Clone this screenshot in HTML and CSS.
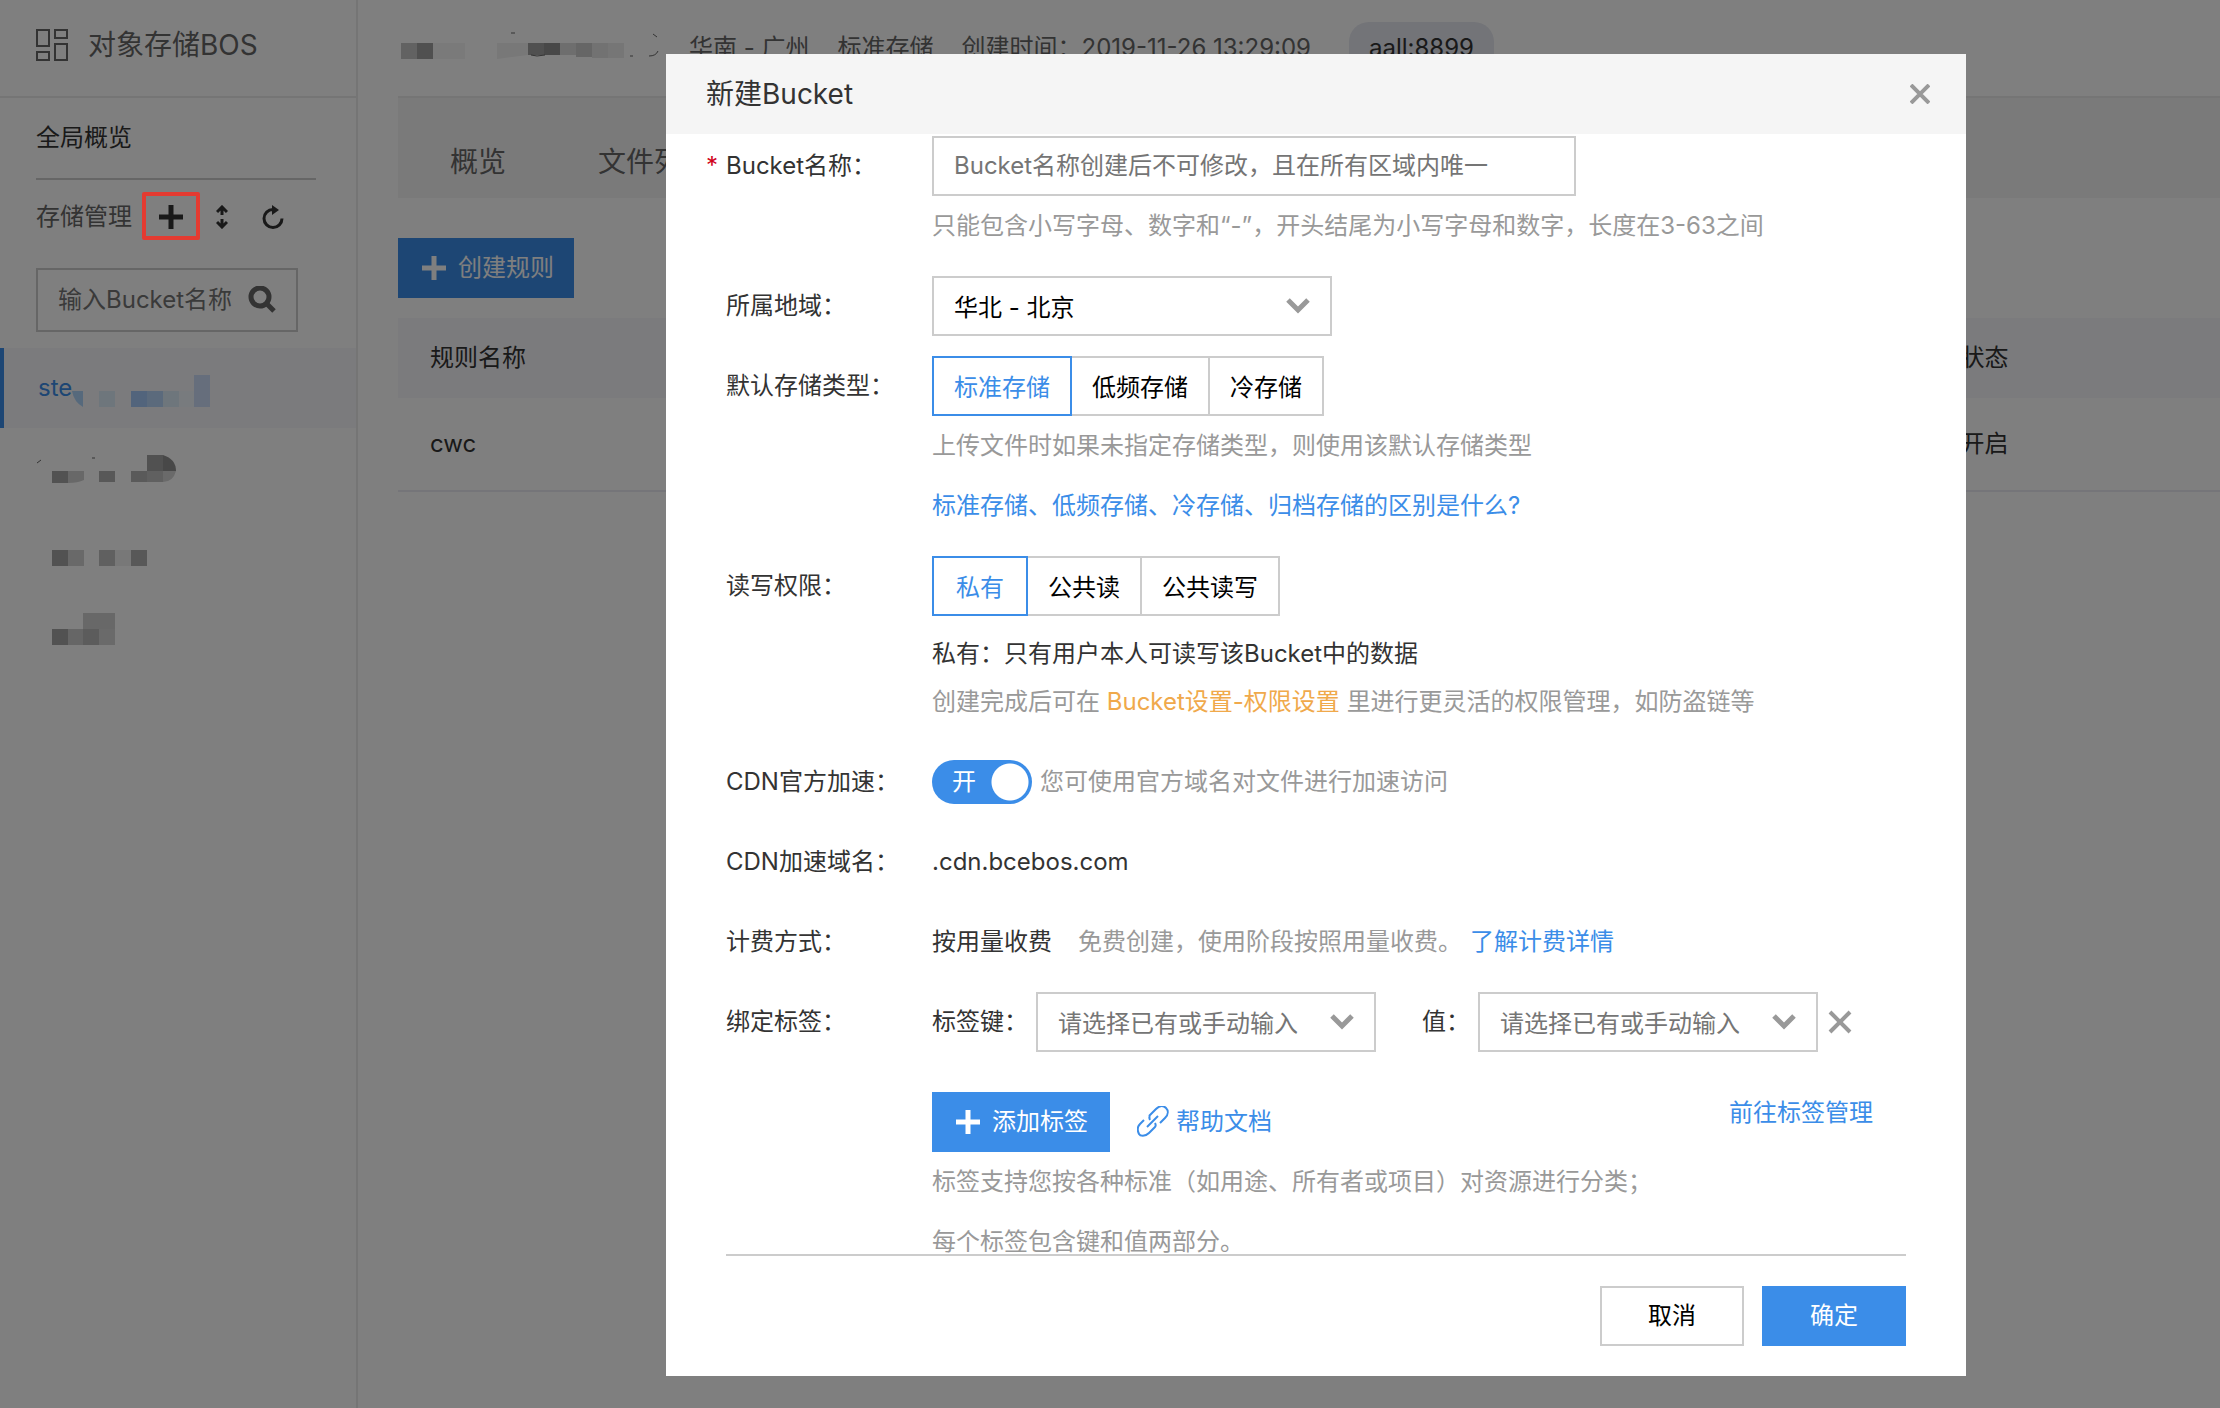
FILE: index.html
```html
<!DOCTYPE html>
<html lang="zh-CN">

<head>
    <meta charset="UTF-8">
    <title>对象存储BOS</title>
    <link rel="stylesheet" href="styles.css">
</head>

<body>
    <div class="page">
        <!-- 左侧导航 -->
        <aside class="sidebar">
            <div class="sidebar-title">
                <svg width="32" height="32" viewBox="0 0 32 32" fill="none" stroke="#666" stroke-width="2">
                    <rect x="1" y="1" width="12" height="16" />
                    <rect x="19" y="1" width="12" height="8" />
                    <rect x="1" y="23" width="12" height="8" />
                    <rect x="19" y="15" width="12" height="16" />
                </svg>
                <span>对象存储BOS</span>
            </div>
            <a class="overview" href="#">全局概览</a>
            <div class="manage">
                <span>存储管理</span>
                <button class="icon-btn add-bucket" aria-label="新建Bucket">
                    <svg width="24" height="24" viewBox="0 0 24 24" stroke="#333" stroke-width="5">
                        <path d="M12 0v24M0 12h24" />
                    </svg>
                </button>
                <button class="icon-btn" aria-label="排序">
                    <svg width="12" height="24" viewBox="0 0 12 24" fill="none" stroke="#333" stroke-width="3">
                        <path d="M6 2v8M1 7l5-5 5 5M6 14v8M1 17l5 5 5-5" />
                    </svg>
                </button>
                <button class="icon-btn" aria-label="刷新">
                    <svg width="24" height="24" viewBox="0 0 24 24">
                        <path d="M12 4.500a9 9 0 1 0 9 9" fill="none" stroke="#333" stroke-width="3" />
                        <path d="M11 0l7 5-7 5z" fill="#333" />
                    </svg>
                </button>
            </div>
            <div class="search">
                <input type="text" placeholder="输入Bucket名称" aria-label="输入Bucket名称">
                <svg width="28" height="28" viewBox="0 0 28 28" fill="none" stroke="#666" stroke-width="5">
                    <circle cx="12" cy="11" r="9" />
                    <path d="M18 17l8 8" />
                </svg>
            </div>
            <ul class="bucket-list">
                <li class="bucket active">
                    <span>ste</span>
                    <svg width="140" height="80" viewBox="0 0 140 80">
                        <path d="M0 43h11v16q-9-5-11-16z" fill="#acd2f8" />
                        <path d="M27 43h16v16h-16z" fill="#dcecf8" />
                        <path d="M59 43h16v16h-16z" fill="#a4c8f8" />
                        <path d="M75 43h16v16h-16z" fill="#b6d4f8" />
                        <path d="M91 43h16v16h-16z" fill="#dcecf8" />
                        <path d="M107 43h16v16h-16z" fill="#f0f6fc" />
                        <path d="M122 27h16v32h-16z" fill="#ccdcf8" />
                    </svg>
                </li>
                <li class="bucket">
                    <svg width="140" height="80" viewBox="0 0 140 80">
                        <path d="M1 35l4-3M56 30h3" stroke="#666" />
                        <path d="M16 43h16v12h-16z" fill="#a4a4a4" />
                        <path d="M32 43h16v9q-6 3-16 3z" fill="#d0d0d0" />
                        <path d="M63 43h16v11h-16z" fill="#b0b0b0" />
                        <path d="M95 43h16v11h-16z" fill="#b4b4b4" />
                        <path d="M111 27h16v16h-16z" fill="#a2a2a2" />
                        <path d="M127 27q13 4 13 16h-13z" fill="#909090" />
                        <path d="M111 43h16v11h-16z" fill="#c0c0c0" />
                        <path d="M127 43h13q-3 11-13 11z" fill="#d4d4d4" />
                    </svg>
                </li>
                <li class="bucket">
                    <svg width="140" height="80" viewBox="0 0 140 80">
                        <path d="M16 42h16v16h-16z" fill="#a4a4a4" />
                        <path d="M32 42h16v16h-16z" fill="#d2d2d2" />
                        <path d="M63 42h16v16h-16z" fill="#c0c0c0" />
                        <path d="M79 42h16v16h-16z" fill="#f0f0f0" />
                        <path d="M95 42h16v16h-16z" fill="#b0b0b0" />
                    </svg>
                </li>
                <li class="bucket">
                    <svg width="140" height="80" viewBox="0 0 140 80">
                        <path d="M47 25h32v16h-32z" fill="#d0d0d0" />
                        <path d="M16 41h16v16h-16z" fill="#a4a4a4" />
                        <path d="M32 41h16v16h-16z" fill="#ccc" />
                        <path d="M47 41h16v16h-16z" fill="#b8b8b8" />
                        <path d="M63 41h16v16h-16z" fill="#d4d4d4" />
                    </svg>
                </li>
            </ul>
        </aside>

        <!-- 右侧内容 -->
        <main class="main">
            <div class="bucket-info">
                <svg width="266" height="32" viewBox="0 0 266 32">
                    <path d="M0 11h16v16h-16z" fill="#c4c4c4" />
                    <path d="M16 11h16v16h-16z" fill="#a0a0a0" />
                    <path d="M32 11h32v16h-32z" fill="#f4f4f4" />
                    <path d="M96 11h31v12l-31 4z" fill="#f0f0f0" />
                    <path d="M127 11h16v12h-16z" fill="#a0a0a0" />
                    <path d="M143 11h16v12h-16z" fill="#909090" />
                    <path d="M159 11h16v12h-16z" fill="#dcdcdc" />
                    <path d="M175 11h16v14h-16z" fill="#ccc" />
                    <path d="M191 11h16v15h-16z" fill="#e4e4e4" />
                    <path d="M207 11h16v15h-16z" fill="#ececec" />
                    <path d="M110 1h4M252 2l4 3M130 23l6 1 8-1M229 24h3M248 24q7 0 9-5" fill="none" stroke="#666" />
                </svg>
                <span>华南 - 广州</span>
                <span>标准存储</span>
                <span>创建时间：2019-11-26 13:29:09</span>
                <span class="tag">aall:8899</span>
            </div>
            <nav class="tabs">
                <a href="#">概览</a>
                <a href="#">文件列表</a>
            </nav>
            <button class="btn btn-primary create-rule">
                <svg width="24" height="24" viewBox="0 0 24 24" stroke="#fff" stroke-width="5">
                    <path d="M12 0v24M0 12h24" />
                </svg>
                <span>创建规则</span>
            </button>
            <table class="rules">
                <thead>
                    <tr>
                        <th class="col-name">规则名称</th>
                        <th>状态</th>
                    </tr>
                </thead>
                <tbody>
                    <tr>
                        <td>cwc</td>
                        <td>开启</td>
                    </tr>
                </tbody>
            </table>
        </main>
    </div>

    <!-- 新建Bucket 弹窗 -->
    <div class="mask">
        <div class="dialog" role="dialog" aria-labelledby="dialog-title">
            <div class="dialog-head">
                <h1 id="dialog-title">新建Bucket</h1>
                <button class="icon-btn" aria-label="关闭">
                    <svg width="20" height="20" viewBox="0 0 20 20" stroke="#999" stroke-width="4">
                        <path d="M1 1l18 18M19 1L1 19" />
                    </svg>
                </button>
            </div>

            <form class="dialog-body">
                <div class="row">
                    <label class="row-label required" for="bucket-name">Bucket名称：</label>
                    <div class="row-content">
                        <input class="field name-field" type="text" id="bucket-name" placeholder="Bucket名称创建后不可修改，且在所有区域内唯一">
                        <p class="hint">只能包含小写字母、数字和“-”，开头结尾为小写字母和数字，长度在3-63之间</p>
                    </div>
                </div>

                <div class="row">
                    <label class="row-label" for="region">所属地域：</label>
                    <div class="row-content">
                        <div class="select region-select">
                            <select class="field" id="region">
                                <option>华北 - 北京</option>
                            </select>
                            <svg class="arrow" width="24" height="16" viewBox="0 0 24 16" fill="none" stroke="#999" stroke-width="5">
                                <path d="M2 2l10 10 10-10" />
                            </svg>
                        </div>
                    </div>
                </div>

                <div class="row">
                    <span class="row-label">默认存储类型：</span>
                    <div class="row-content">
                        <div class="segment">
                            <button type="button" class="selected">标准存储</button>
                            <button type="button">低频存储</button>
                            <button type="button">冷存储</button>
                        </div>
                        <p class="hint">上传文件时如果未指定存储类型，则使用该默认存储类型</p>
                        <p><a class="link" href="#">标准存储、低频存储、冷存储、归档存储的区别是什么?</a></p>
                    </div>
                </div>

                <div class="row">
                    <span class="row-label">读写权限：</span>
                    <div class="row-content">
                        <div class="segment">
                            <button type="button" class="selected">私有</button>
                            <button type="button">公共读</button>
                            <button type="button">公共读写</button>
                        </div>
                        <div class="acl-desc">
                            <p>私有：只有用户本人可读写该Bucket中的数据</p>
                            <p class="hint">创建完成后可在 <span class="warn">Bucket设置-权限设置</span> 里进行更灵活的权限管理，如防盗链等</p>
                        </div>
                    </div>
                </div>

                <div class="row">
                    <label class="row-label" for="cdn">CDN官方加速：</label>
                    <div class="row-content inline">
                        <div class="switch">
                            <input type="checkbox" id="cdn" checked>
                            <span>开</span>
                        </div>
                        <span class="hint">您可使用官方域名对文件进行加速访问</span>
                    </div>
                </div>

                <div class="row">
                    <span class="row-label">CDN加速域名：</span>
                    <div class="row-content">.cdn.bcebos.com</div>
                </div>

                <div class="row">
                    <span class="row-label">计费方式：</span>
                    <div class="row-content inline">
                        <span class="billing">按用量收费</span>
                        <span class="hint">免费创建，使用阶段按照用量收费。</span>
                        <a class="link" href="#">了解计费详情</a>
                    </div>
                </div>

                <div class="row">
                    <span class="row-label">绑定标签：</span>
                    <div class="row-content">
                        <div class="inline">
                            <label for="tag-key">标签键：</label>
                            <div class="select tag-select">
                                <select class="field placeholder" id="tag-key">
                                    <option>请选择已有或手动输入</option>
                                </select>
                                <svg class="arrow" width="24" height="16" viewBox="0 0 24 16" fill="none" stroke="#999" stroke-width="5">
                                    <path d="M2 2l10 10 10-10" />
                                </svg>
                            </div>
                            <label class="tag-value" for="tag-value">值：</label>
                            <div class="select tag-select">
                                <select class="field placeholder" id="tag-value">
                                    <option>请选择已有或手动输入</option>
                                </select>
                                <svg class="arrow" width="24" height="16" viewBox="0 0 24 16" fill="none" stroke="#999" stroke-width="5">
                                    <path d="M2 2l10 10 10-10" />
                                </svg>
                            </div>
                            <button type="button" class="icon-btn" aria-label="删除标签">
                                <svg width="28" height="28" viewBox="0 0 28 28" stroke="#999" stroke-width="4">
                                    <path d="M4 4l20 20M24 4L4 24" />
                                </svg>
                            </button>
                        </div>
                        <div class="tag-actions">
                            <button type="button" class="btn btn-primary add-tag">
                                <svg width="24" height="24" viewBox="0 0 24 24" stroke="#fff" stroke-width="5">
                                    <path d="M12 0v24M0 12h24" />
                                </svg>
                                <span>添加标签</span>
                            </button>
                            <a class="link help" href="#">
                                <svg width="32" height="32" viewBox="0 0 32 32" fill="none" stroke="#3b8de8" stroke-width="2">
                                    <path d="M12 10l7-7c4-4 8-3 10-1s3 6-1 10l-5 5" />
                                    <path d="M13 14c-1-2-1-3 0-4" />
                                    <path d="M7 14l-4 4c-4 4-2 8-1 10s6 3 10-1l6-6c1-1 1-2 0-4" />
                                    <path d="M10 21l11-11" />
                                </svg>
                                <span>帮助文档</span>
                            </a>
                            <a class="link tag-manage" href="#">前往标签管理</a>
                        </div>
                        <p class="hint">标签支持您按各种标准（如用途、所有者或项目）对资源进行分类；</p>
                        <p class="hint">每个标签包含键和值两部分。</p>
                    </div>
                </div>
            </form>

            <div class="dialog-foot">
                <button class="btn">取消</button>
                <button class="btn btn-primary">确定</button>
            </div>
        </div>
    </div>
</body>

</html>
```

FILE: styles.css
```css
/* 全局 */
* {
    box-sizing: border-box;
}

body {
    margin: 0;
    font-family: Inter, "Noto Sans CJK SC", sans-serif;
    font-size: 24px;
    line-height: 60px;
    color: #333;
    background: #fff;
    overflow: hidden;
}

p,
h1,
ul {
    margin: 0;
    padding: 0;
}

a {
    color: inherit;
    text-decoration: none;
}

svg {
    display: block;
    flex: none;
}

button,
input,
select {
    font: inherit;
    color: inherit;
}

.page {
    display: flex;
    min-height: 100vh;
}

.icon-btn {
    padding: 0;
    border: none;
    background: none;
    cursor: pointer;
}

/* 左侧导航 */
.sidebar {
    flex: none;
    width: 358px;
    border-right: 2px solid #ebebeb;
}

.sidebar-title {
    display: flex;
    align-items: center;
    gap: 20px;
    height: 98px;
    padding: 0 36px 6px;
    border-bottom: 2px solid #ebebeb;
    font-size: 28px;
    color: #666;
}

.overview {
    display: block;
    margin: 0 40px 0 36px;
    border-bottom: 2px solid #ccc;
    line-height: 80px;
}

.manage {
    display: flex;
    align-items: center;
    margin-left: 36px;
    height: 74px;
    color: #666;
}

.manage .icon-btn {
    margin-right: 33px;
}

/* 红框高亮，显示在遮罩之上 */
.manage .add-bucket {
    position: relative;
    margin-left: 27px;
}

.add-bucket::after {
    content: "";
    position: absolute;
    z-index: 20;
    inset: -13px -17px -11px;
    border: 4px solid #e43b31;
    border-radius: 2px;
}

.search {
    display: flex;
    align-items: center;
    margin: 14px 58px 16px 36px;
    height: 64px;
    padding: 0 20px;
    border: 2px solid #ccc;
}

.search input {
    flex: 1;
    min-width: 0;
    padding: 0;
    border: none;
    outline: none;
    background: none;
}

.search input::placeholder {
    color: #757575;
}

.bucket-list {
    list-style: none;
}

.bucket {
    display: flex;
    height: 80px;
    padding-left: 36px;
    line-height: 80px;
}

.bucket.active {
    padding-left: 34px;
    border-left: 4px solid #3b8de8;
    background: #f7f7fb;
    color: #3b8de8;
}

/* 右侧内容 */
.main {
    flex: 1;
    padding-left: 40px;
}

.bucket-info {
    display: flex;
    align-items: center;
    height: 96px;
    color: #666;
    white-space: nowrap;
}

.bucket-info svg {
    margin: 0 22px 0 3px;
}

.bucket-info span {
    margin-right: 28px;
}

.bucket-info .tag {
    margin-left: 10px;
    padding: 0 20px;
    border-radius: 20px;
    line-height: 52px;
    background: #e6e8f0;
    color: #333;
}

.tabs {
    display: flex;
    gap: 92px;
    height: 102px;
    padding: 30px 52px 0;
    border-top: 2px solid #ebebeb;
    background: #f5f5f5;
    font-size: 28px;
    line-height: 68px;
    color: #666;
}

.create-rule {
    margin: 40px 0 20px;
}

.rules {
    width: 100%;
    border-spacing: 0;
}

.rules th,
.rules td {
    height: 80px;
    padding: 0 32px;
    text-align: left;
    font-weight: 400;
}

.rules thead {
    background: #f7f7fb;
}

.rules td {
    height: 94px;
    border-bottom: 2px solid #ebebf2;
}

.rules .col-name {
    width: 84%;
}

/* 按钮 */
.btn {
    display: flex;
    align-items: center;
    justify-content: center;
    gap: 12px;
    height: 60px;
    padding: 0 18px 0 22px;
    border: 2px solid #ccc;
    background: #fff;
    color: #000;
    cursor: pointer;
}

.btn-primary {
    border-color: #3b8de8;
    background: #3b8de8;
    color: #fff;
}

/* 弹窗 */
.mask {
    position: fixed;
    z-index: 10;
    inset: 0;
    display: flex;
    justify-content: flex-end;
    align-items: flex-start;
    padding: 54px 254px 32px 0;
    background: rgba(0, 0, 0, 0.5);
}

.dialog {
    width: 1300px;
    background: #fff;
}

.dialog-head {
    display: flex;
    align-items: center;
    justify-content: space-between;
    height: 80px;
    padding: 0 36px 0 40px;
    background: #f5f5f5;
}

.dialog-head h1 {
    font-size: 28px;
    font-weight: 400;
}

.dialog-body {
    max-height: calc(100vh - 288px);
    padding: 2px 60px 0;
    overflow: hidden;
}

.dialog-foot {
    display: flex;
    justify-content: flex-end;
    gap: 18px;
    margin: 0 60px;
    padding: 30px 0;
    border-top: 2px solid #ccc;
}

.dialog-foot .btn {
    width: 144px;
    padding: 0;
}

/* 表单行 */
.row {
    display: flex;
    margin-bottom: 20px;
}

.row-label {
    flex: none;
    width: 206px;
}

.required::before {
    content: "*";
    position: absolute;
    margin-left: -20px;
    color: #d0021b;
}

.row-content {
    flex: 1;
}

.inline {
    display: flex;
    align-items: center;
    gap: 8px;
}

.hint {
    color: #999;
}

.link {
    color: #3b8de8;
}

.warn {
    color: #f0a94b;
}

.field {
    display: block;
    width: 100%;
    height: 60px;
    padding: 0 20px;
    border: 2px solid #ccc;
    border-radius: 0;
    outline: none;
    background: #fff;
    color: #000;
    appearance: none;
}

.name-field {
    width: 644px;
}

.field::placeholder,
.field.placeholder {
    color: #757575;
}

.select {
    position: relative;
}

.region-select {
    width: 400px;
}

.tag-select {
    width: 340px;
}

.arrow {
    position: absolute;
    top: 22px;
    right: 22px;
    pointer-events: none;
}

.tag-value {
    margin-left: 38px;
}

.billing {
    margin-right: 18px;
}

/* 分段按钮 */
.segment {
    display: flex;
}

.segment button {
    position: relative;
    min-width: 96px;
    height: 60px;
    margin-left: -2px;
    padding: 0 20px;
    border: 2px solid #ccc;
    background: #fff;
    color: #000;
}

.segment button:first-child {
    margin-left: 0;
}

.segment .selected {
    z-index: 1;
    border-color: #3b8de8;
    color: #3b8de8;
}

.acl-desc {
    padding: 14px 0 6px;
    line-height: 48px;
}

/* 开关 */
.switch {
    position: relative;
    width: 100px;
    height: 44px;
    line-height: 44px;
    color: #fff;
}

.switch input {
    display: block;
    width: 100%;
    height: 100%;
    margin: 0;
    border-radius: 22px;
    background: radial-gradient(circle at 78px 22px, #fff 18px, #3b8de8 19px);
    appearance: none;
}

.switch span {
    position: absolute;
    top: 0;
    left: 20px;
    pointer-events: none;
}

/* 标签操作 */
.tag-actions {
    display: flex;
    align-items: center;
    margin-top: 40px;
}

.add-tag {
    padding-right: 20px;
}

.help {
    display: flex;
    align-items: center;
    gap: 7px;
    margin-left: 27px;
}

.tag-manage {
    margin: 0 33px 18px auto;
    line-height: 40px;
}
```
